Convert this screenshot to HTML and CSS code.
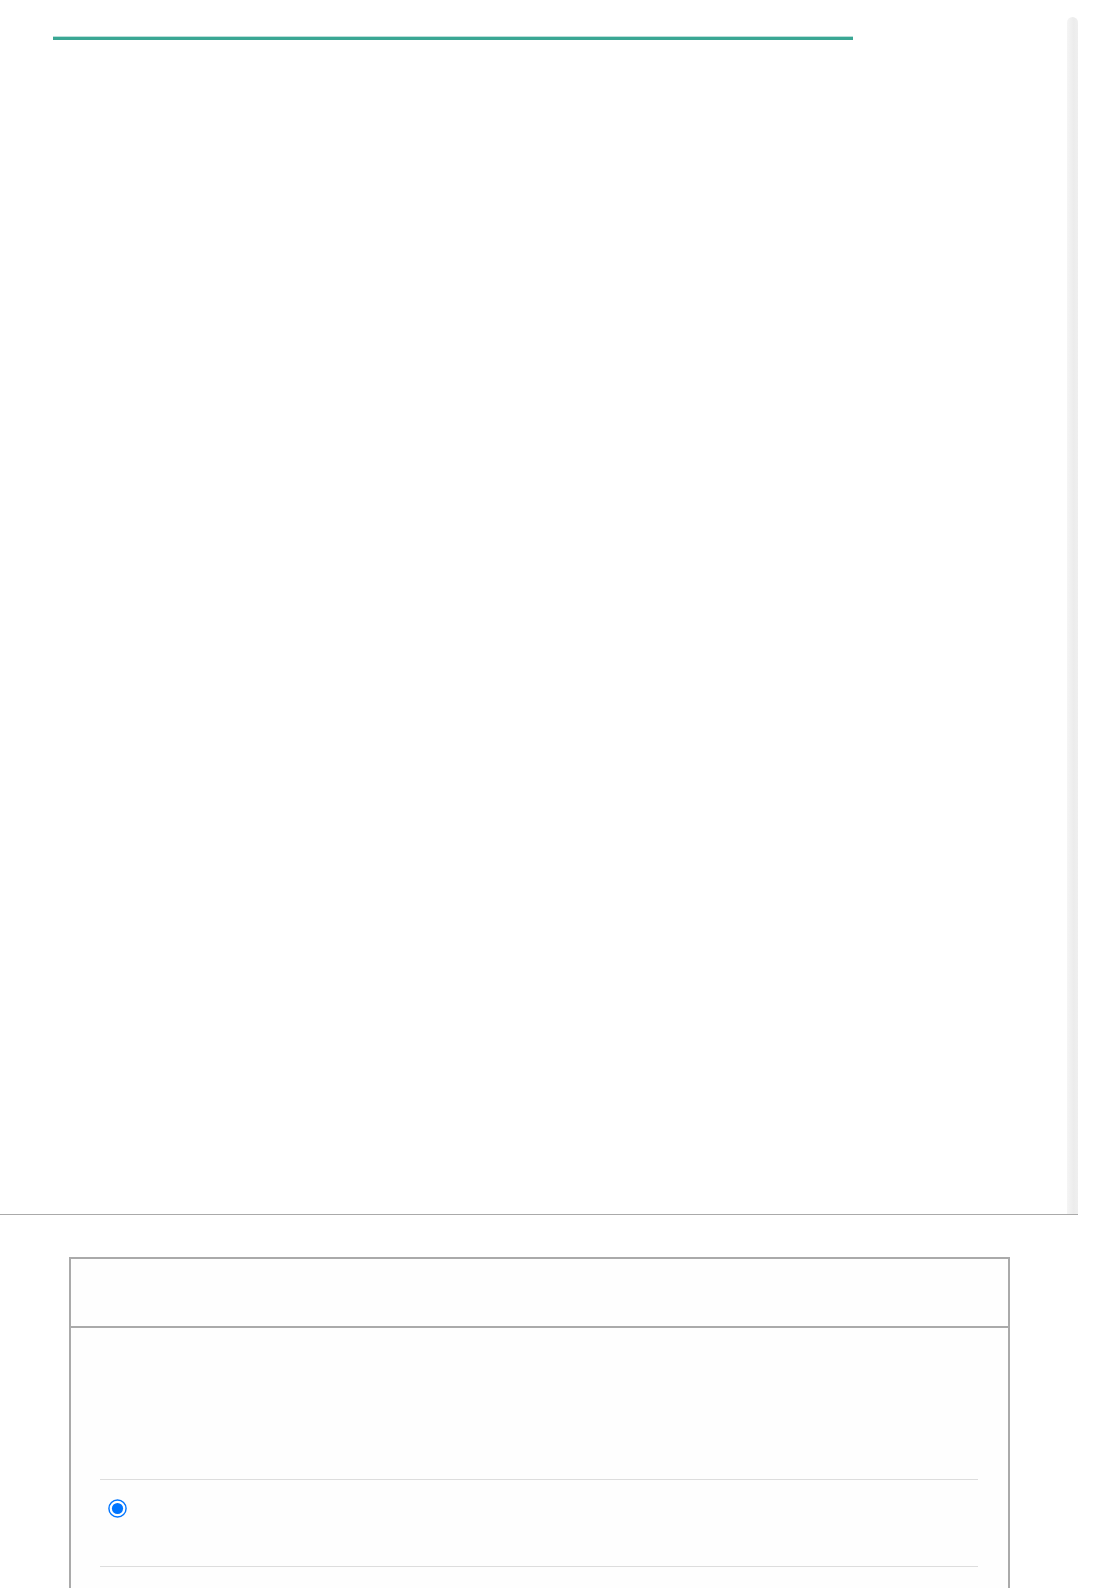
FILE: index.html
```html
<!DOCTYPE html>
<html lang="en">
<head>
    <meta charset="UTF-8">
    <meta name="viewport" content="width=device-width, initial-scale=1.0">
    <title>Viewer</title>
    <link rel="stylesheet" href="styles.css">
</head>
<body>

<div class="viewer">
    <div class="viewer-content">
        <div class="progress"></div>
    </div>
    <div class="scroll-track"></div>
</div>

<div class="card">
    <div class="card-header"></div>
    <div class="card-body">
        <div class="option">
            <input type="radio" name="choice" id="choice1" checked>
        </div>
        <div class="option">
            <input type="radio" name="choice" id="choice2" class="hidden">
        </div>
    </div>
</div>

</body>
</html>
```

FILE: styles.css
```css
html, body {
    overflow: hidden;
}
body {
    font-family: 'Liberation Sans', Arial, sans-serif;
    margin: 0;
    background-color: #fff;
}
.viewer {
    display: flex;
    width: 1078px;
    height: 1214px;
    border-bottom: 1px solid #aaa;
}
.viewer-content {
    flex: 1;
}
.progress {
    width: 800px;
    height: 3px;
    margin: 37px 0 0 53px;
    background-color: #3aa794;
    box-shadow: 0 -1px 0 rgba(58, 167, 148, 0.35);
}
.scroll-track {
    width: 11px;
    margin-top: 17px;
    border-radius: 6px 6px 0 0;
    background: linear-gradient(to right, #f5f5f5, #ececec 60%, #efefef);
}
.card {
    width: 937px;
    margin: 42px 0 0 69px;
    border: 2px solid #aaa;
    background-color: #fefefe;
}
.card-header {
    height: 67px;
    border-bottom: 2px solid #aaa;
}
.card-body {
    padding: 151px 30px 0 29px;
}
.option {
    height: 67px;
    padding-top: 19px;
    border-top: 1px solid #ddd;
}
.option input {
    display: block;
    width: 13px;
    height: 13px;
    margin: 3px 0 0 11px;
    transform: scale(1.43);
}
.option .hidden {
    visibility: hidden;
}
```
